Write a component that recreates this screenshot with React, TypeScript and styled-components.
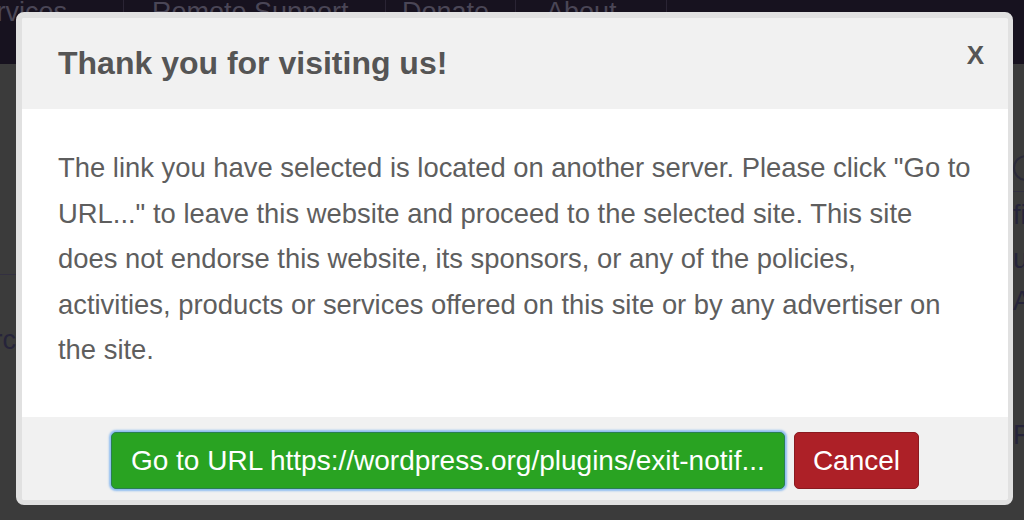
import React from "react";
import styled, { createGlobalStyle } from "styled-components";

const GlobalStyle = createGlobalStyle`
    html, body {
        margin: 0;
        padding: 0;
        background: #3b3b3b;
        font-family: "Liberation Sans", Arial, Helvetica, sans-serif;
    }
    * {
        box-sizing: border-box;
    }
`;

const Page = styled.div`
    width: 100%;
    height: 520px;
    overflow: hidden;
    background: #3b3b3b;
    display: flex;
    flex-direction: column;
`;

const NavBar = styled.nav`
    height: 64px;
    background: #17121f;
    display: flex;
    align-items: flex-start;
`;

const NavItem = styled.div<{ $width: number; $pad: number; $end?: boolean }>`
    width: ${(p) => p.$width}px;
    flex: none;
    height: 64px;
    border-right: 1px solid #2a2434;
    color: #4a4656;
    font-size: 27px;
    line-height: 24px;
    white-space: nowrap;
    overflow: hidden;
    display: flex;
    justify-content: ${(p) => (p.$end ? "flex-end" : "flex-start")};
    padding: ${(p) => (p.$end ? `0 ${p.$pad}px 0 0` : `0 0 0 ${p.$pad}px`)};
`;

const Content = styled.div`
    flex: 1;
    display: flex;
    justify-content: space-between;
`;

const SideEdge = styled.div<{ $align: "start" | "end" }>`
    width: ${(p) => (p.$align === "end" ? 16 : 11)}px;
    overflow: hidden;
    display: flex;
    flex-direction: column;
    align-items: ${(p) => (p.$align === "end" ? "flex-end" : "flex-start")};
`;

const FaintText = styled.div<{ $top: number }>`
    margin-top: ${(p) => p.$top}px;
    color: #26243a;
    font-size: 27px;
    line-height: 30px;
    white-space: nowrap;
`;

const FaintRule = styled.div<{ $top: number }>`
    margin-top: ${(p) => p.$top}px;
    width: 40px;
    height: 1px;
    background: #333040;
    flex: none;
`;

const FaintCircle = styled.div`
    margin-top: 91px;
    width: 26px;
    height: 26px;
    border: 2px solid #2b2a3a;
    border-radius: 50%;
    flex: none;
`;

const Overlay = styled.div`
    position: fixed;
    inset: 0;
    display: flex;
    align-items: flex-start;
    padding: 12px 0 0 16px;
`;

const Dialog = styled.div`
    width: 997px;
    background: #f1f1f1;
    border-style: solid;
    border-color: #e1e1e1;
    border-width: 6px 5px 5px 6px;
    border-radius: 8px;
    display: flex;
    flex-direction: column;
    overflow: hidden;
`;

const Header = styled.div`
    height: 91px;
    background: #f1f1f1;
    padding: 0 24px 0 36px;
    display: flex;
    align-items: center;
    justify-content: space-between;
`;

const Title = styled.h2`
    margin: 0;
    font-size: 32px;
    font-weight: bold;
    color: #555555;
`;

const Close = styled.button`
    border: 0;
    background: transparent;
    padding: 0;
    margin-bottom: 16px;
    font-family: inherit;
    font-size: 26px;
    font-weight: bold;
    color: #555555;
    cursor: pointer;
`;

const Body = styled.div`
    height: 308px;
    background: #ffffff;
    padding: 36px 36px 0 36px;
`;

const Message = styled.p`
    margin: 0;
    font-size: 27.4px;
    line-height: 45.5px;
    color: #5e5e5e;
`;

const Footer = styled.div`
    height: 83px;
    background: #f1f1f1;
    padding-top: 4px;
    display: flex;
    align-items: center;
    justify-content: center;
    gap: 9px;
`;

const Button = styled.button<{ $variant: "go" | "cancel" }>`
    height: 57px;
    padding: 0 ${(p) => (p.$variant === "go" ? 19 : 18)}px;
    font-family: inherit;
    font-size: 28px;
    color: #ffffff;
    border-radius: 5px;
    cursor: pointer;
    background: ${(p) => (p.$variant === "go" ? "#29a322" : "#ad2027")};
    border: 1px solid ${(p) => (p.$variant === "go" ? "#2a7f52" : "#8a1a20")};
    box-shadow: ${(p) => (p.$variant === "go" ? "0 0 2px 2px #8fbdf0" : "none")};
`;

export default function App() {
    return (
        <>
            <GlobalStyle />
            <Page>
                <NavBar>
                    <NavItem $width={124} $pad={56} $end>Services</NavItem>
                    <NavItem $width={262} $pad={28}>Remote Support</NavItem>
                    <NavItem $width={130} $pad={16}>Donate</NavItem>
                    <NavItem $width={151} $pad={30}>About</NavItem>
                </NavBar>
                <Content>
                    <SideEdge $align="end">
                        <FaintRule $top={210} />
                        <FaintText $top={50}>Arc</FaintText>
                    </SideEdge>
                    <SideEdge $align="start">
                        <FaintCircle />
                        <FaintRule $top={10} />
                        <FaintText $top={8}>fi</FaintText>
                        <FaintText $top={14}>u</FaintText>
                        <FaintText $top={12}>Ap</FaintText>
                        <FaintText $top={104}>Fo</FaintText>
                    </SideEdge>
                </Content>
            </Page>
            <Overlay>
                <Dialog>
                    <Header>
                        <Title>Thank you for visiting us!</Title>
                        <Close>X</Close>
                    </Header>
                    <Body>
                        <Message>
                            The link you have selected is located on another server. Please click "Go to
                            URL..." to leave this website and proceed to the selected site. This site does
                            not endorse this website, its sponsors, or any of the policies, activities,
                            products or services offered on this site or by any advertiser on the site.
                        </Message>
                    </Body>
                    <Footer>
                        <Button $variant="go">Go to URL https://wordpress.org/plugins/exit-notif...</Button>
                        <Button $variant="cancel">Cancel</Button>
                    </Footer>
                </Dialog>
            </Overlay>
        </>
    );
}
